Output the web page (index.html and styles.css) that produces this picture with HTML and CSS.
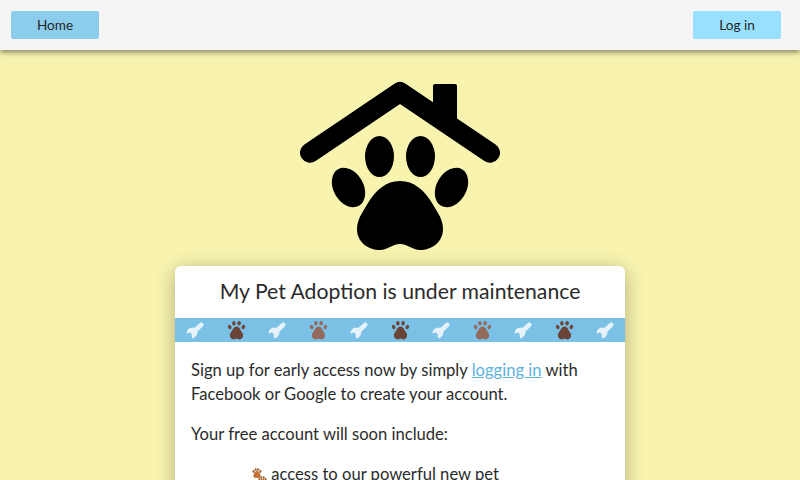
FILE: index.html
```html
<!DOCTYPE html>
<html lang="en">
<head>
  <meta charset="UTF-8" />
  <meta name="viewport" content="width=device-width, initial-scale=1.0"/>
  <title>My Pet Adoption</title>
  <link rel="stylesheet" href="styles.css">
</head>
<body>

  <svg class="defs" width="0" height="0">
    <symbol id="wrench" viewBox="0 0 20 20">
      <path d="M14.4 3 C15.8 2 18 3 18 4.8 C18 5.8 17.4 6.4 16.8 7 L12 11.4 C12 14.6 10.4 17.4 6.4 18.6 L6.2 14.4 L4.8 12.6 L1 13.4 C1 10.4 3 7.8 6.4 7.8 L9 7.8 Z"/>
    </symbol>
    <symbol id="paw" viewBox="0 0 20 20">
      <ellipse cx="7.4" cy="3.2" rx="1.7" ry="2.3"/>
      <ellipse cx="12.6" cy="3.2" rx="1.7" ry="2.3"/>
      <ellipse cx="3.2" cy="7" rx="1.7" ry="2.3" transform="rotate(-25 3.2 7)"/>
      <ellipse cx="16.8" cy="7" rx="1.7" ry="2.3" transform="rotate(25 16.8 7)"/>
      <path d="M10 6.6 C8 6.6 7 8.2 6 10 C5 11.6 3.4 13 3.4 15.6 C3.4 18 5 19.4 7 19.4 C8.4 19.4 9 18.6 10 18.6 C11 18.6 11.6 19.4 13 19.4 C15 19.4 16.6 18 16.6 15.6 C16.6 13 15 11.6 14 10 C13 8.2 12 6.6 10 6.6 Z"/>
    </symbol>
  </svg>

  <nav class="topbar">
    <a class="btn btn-home" href="#">Home</a>
    <a class="btn btn-login" href="#">Log in</a>
  </nav>

  <main class="page">
    <svg class="logo" viewBox="0 0 200 170" width="200" height="170">
      <rect x="133" y="4" width="24" height="40" rx="2"/>
      <path class="roof" d="M10 72.7 L100 12 L190 72.7"/>
      <ellipse cx="79.5" cy="76.5" rx="14.5" ry="20.5"/>
      <ellipse cx="120.5" cy="76.5" rx="14.5" ry="20.5"/>
      <ellipse cx="48.5" cy="107.5" rx="15" ry="21" transform="rotate(-30 48.5 107.5)"/>
      <ellipse cx="151.5" cy="107.5" rx="15" ry="21" transform="rotate(30 151.5 107.5)"/>
      <path d="M100 101 C86 101 76 110 68 123 L62 133 C59 138 57 143 57 149 C57 162 68 170 80 170 C88 170 92 164 100 164 C108 164 112 170 120 170 C132 170 143 162 143 149 C143 143 141 138 138 133 L132 123 C124 110 114 101 100 101 Z"/>
    </svg>

    <section class="card">
      <h1 class="card-title">My Pet Adoption is under maintenance</h1>

      <div class="band">
        <svg class="band-icon wrench"><use href="#wrench"/></svg>
        <svg class="band-icon paw-dark"><use href="#paw"/></svg>
        <svg class="band-icon wrench"><use href="#wrench"/></svg>
        <svg class="band-icon paw-light"><use href="#paw"/></svg>
        <svg class="band-icon wrench"><use href="#wrench"/></svg>
        <svg class="band-icon paw-dark"><use href="#paw"/></svg>
        <svg class="band-icon wrench"><use href="#wrench"/></svg>
        <svg class="band-icon paw-light"><use href="#paw"/></svg>
        <svg class="band-icon wrench"><use href="#wrench"/></svg>
        <svg class="band-icon paw-dark"><use href="#paw"/></svg>
        <svg class="band-icon wrench"><use href="#wrench"/></svg>
      </div>

      <div class="card-body">
        <p>Sign up for early access now by simply <a href="#">logging in</a> with Facebook or Google to create your account.</p>
        <p>Your free account will soon include:</p>
        <ul class="features">
          <li>
            <svg class="bullet" viewBox="0 0 16 16">
              <use href="#paw" x="1" y="1" width="10" height="10"/>
              <use href="#paw" x="7" y="9" width="9" height="9"/>
            </svg>
            access to our powerful new pet
          </li>
        </ul>
      </div>
    </section>
  </main>

</body>
</html>
```

FILE: styles.css
```css
:root {
  --blue: #7bc1e6;
  --text-color: #2b2b2b;
}
* {
  box-sizing: border-box;
}
html, body {
  height: 480px;
  overflow: hidden;
}
body {
  margin: 0;
  font-family: 'Lato', sans-serif;
  background-color: #f8f4b0;
  color: var(--text-color);
}
.defs {
  display: block;
  height: 0;
}
.topbar {
  height: 50px;
  padding: 11px 19px 11px 11px;
  background: #f5f5f5;
  box-shadow: 0 2px 6px rgba(0, 0, 0, 0.5);
  display: flex;
  justify-content: space-between;
  align-items: flex-start;
  position: relative;
}
.btn {
  width: 88px;
  height: 28px;
  line-height: 28px;
  text-align: center;
  font-size: 13.6px;
  color: #212529;
  text-decoration: none;
  border-radius: 2px;
}
.btn-home {
  background: #8ccdec;
}
.btn-login {
  background: #99e0ff;
}
.page {
  display: flex;
  flex-direction: column;
  align-items: center;
  padding-top: 30px;
}
.logo {
  display: block;
  fill: #000;
}
.roof {
  fill: none;
  stroke: #000;
  stroke-width: 20;
  stroke-linecap: round;
  stroke-linejoin: round;
}
.card {
  width: 450px;
  margin-top: 16px;
  background: white;
  border-radius: 6px 6px 0 0;
  box-shadow: 0 4px 20px rgba(0, 0, 0, 0.3);
}
.card-title {
  margin: 0;
  height: 52px;
  line-height: 51px;
  text-align: center;
  font-size: 21.2px;
  font-weight: 400;
}
.band {
  height: 24px;
  background: var(--blue);
  display: flex;
  overflow: hidden;
}
.band-icon {
  flex: 0 0 41px;
  width: 41px;
  height: 20px;
  margin-top: 2px;
}
.wrench {
  fill: #e6f2f9;
}
.paw-dark {
  fill: #6b4438;
}
.paw-light {
  fill: #936a5c;
}
.card-body {
  padding: 16px;
  font-size: 16.6px;
  line-height: 24px;
}
.card-body p {
  margin: 0 0 16px;
}
.card-body a {
  color: #5eb3dc;
}
.features {
  list-style: none;
  margin: 0;
  padding: 0 0 0 60px;
}
.bullet {
  width: 16px;
  height: 16px;
  fill: #cf6f2a;
  stroke: #5a3010;
  stroke-width: 0.8;
  vertical-align: -3px;
}
```
